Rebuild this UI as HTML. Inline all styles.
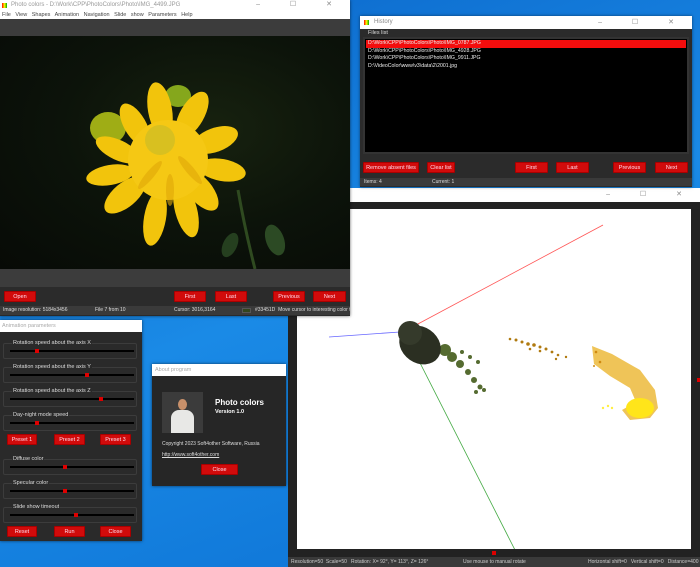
<!DOCTYPE html>
<html><head><meta charset="utf-8"><style>
*{margin:0;padding:0;box-sizing:border-box}
body{width:700px;height:567px;overflow:hidden;position:relative;background:linear-gradient(160deg,#0a64c8 0%,#1a8ae6 50%,#0b6fd2 100%);font-family:"Liberation Sans",sans-serif;font-size:6px;color:#ddd}
.abs{position:absolute}
.tb{background:#fff;color:#888;font-size:6px;line-height:13px;padding-left:3px}
.btn{position:absolute;background:#d10b0b;color:#fde;font-size:5.5px;text-align:center;border:1px solid #a00;border-radius:1px}
.ctl{position:absolute;right:4px;top:0;color:#888;font-size:7px;letter-spacing:14px}
.grp{position:absolute;border:1px solid #3c3c3c;border-radius:2px}
.grp span{position:absolute;top:-4px;left:8px;font-size:5.5px;color:#ddd;background:#2a2a2a;padding:0 1px}
.trk{position:absolute;left:6px;right:2px;height:2px;background:#000}
.th{position:absolute;width:4px;height:4px;background:#d00;top:-1px}
</style></head><body>

<!-- 3D window -->
<div class="abs" style="left:288px;top:188px;width:412px;height:379px;background:#222">
 <div class="tb abs" style="left:0;top:0;width:412px;height:14px"><span class="ctl" style="right:4px">– ☐ ✕</span></div>
 <div class="abs" style="left:9px;top:21px;width:394px;height:340px;background:#fff;overflow:hidden">
  <svg width="394" height="340" viewBox="297 209 394 340">
   <line x1="416" y1="325" x2="603" y2="225" stroke="#f55" stroke-width="0.8"/>
   <line x1="329" y1="337" x2="400" y2="332" stroke="#66f" stroke-width="0.8"/>
   <line x1="416" y1="355" x2="515" y2="550" stroke="#4a4" stroke-width="0.8"/>
   <g fill="#556b30">
    <circle cx="445" cy="350" r="6"/><circle cx="452" cy="357" r="5"/><circle cx="460" cy="364" r="4"/><circle cx="468" cy="372" r="3"/><circle cx="474" cy="380" r="3"/><circle cx="480" cy="387" r="2.5"/><circle cx="462" cy="352" r="2"/><circle cx="470" cy="357" r="2"/><circle cx="478" cy="362" r="2"/><circle cx="476" cy="392" r="2"/><circle cx="484" cy="390" r="2"/>
   </g>
   <ellipse cx="420" cy="345" rx="22" ry="18" fill="#2b2f22" transform="rotate(35 420 345)"/>
   <circle cx="410" cy="333" r="12" fill="#353a2b"/>
   <g fill="#b07a10">
    <circle cx="510" cy="339" r="1.3"/><circle cx="516" cy="340" r="1.5"/><circle cx="522" cy="342" r="1.5"/><circle cx="528" cy="344" r="1.8"/><circle cx="534" cy="345" r="1.8"/><circle cx="540" cy="347" r="1.5"/><circle cx="546" cy="349" r="1.5"/><circle cx="552" cy="352" r="1.4"/><circle cx="558" cy="355" r="1.3"/><circle cx="566" cy="357" r="1.2"/><circle cx="530" cy="349" r="1.3"/><circle cx="540" cy="351" r="1.3"/><circle cx="556" cy="359" r="1.2"/>
   </g>
   <path d="M592 346 L612 354 L640 370 L655 390 L658 408 L650 418 L630 420 L622 410 L636 402 L630 388 L610 376 L594 364Z" fill="#eab020" opacity="0.75"/>
   <ellipse cx="640" cy="408" rx="14" ry="10" fill="#ffe51a"/>
   <g fill="#ffee40"><circle cx="603" cy="408" r="1.2"/><circle cx="608" cy="406" r="1.2"/><circle cx="612" cy="408" r="1.2"/></g>
   <g fill="#d08a10"><circle cx="596" cy="352" r="1.3"/><circle cx="600" cy="362" r="1.3"/><circle cx="594" cy="366" r="1"/></g>
  </svg>
 </div>
 <div class="abs" style="left:409px;top:190px;width:3px;height:4px;background:#d00"></div>
 <div class="abs" style="left:204px;top:363px;width:4px;height:4px;background:#d00"></div>
 <div class="abs" style="left:0;top:369px;width:412px;height:10px;background:#3a3a3a;color:#ccc;font-size:5px;line-height:10px;padding-left:3px;white-space:nowrap">Resolution=50&nbsp; Scale=50&nbsp;&nbsp; Rotation: X= 92°, Y= 113°, Z= 126°<span class="abs" style="left:175px">Use mouse to manual rotate</span><span class="abs" style="left:300px">Horizontal shift=0&nbsp;&nbsp; Vertical shift=0&nbsp;&nbsp; Distance=400</span></div>
</div>

<!-- History window -->
<div class="abs" style="left:360px;top:16px;width:332px;height:171px;background:#2b2b2b;box-shadow:0 0 3px rgba(0,0,0,.5)">
 <div class="tb abs" style="left:0;top:0;width:332px;height:13px;padding-left:14px">History<span class="abs" style="left:4px;top:4px;width:5px;height:5px;background:linear-gradient(90deg,#f00,#ff0,#0a0)"></span><span class="ctl">– ☐ ✕</span></div>
 <div class="abs" style="left:8px;top:14px;font-size:5.5px;color:#ddd">Files list</div>
 <div class="abs" style="left:3px;top:21px;width:326px;height:117px;background:#000;border:2px solid #333;font-size:5.2px;line-height:7.7px;color:#eee">
  <div style="background:#f40d0d;margin:1px 1px 0;padding-left:2px">D:\Work\CPP\PhotoColors\Photo\IMG_0787.JPG</div>
  <div style="padding-left:3px">D:\Work\CPP\PhotoColors\Photo\IMG_4928.JPG</div>
  <div style="padding-left:3px">D:\Work\CPP\PhotoColors\Photo\IMG_9911.JPG</div>
  <div style="padding-left:3px">D:\VideoColor\www\v3\data\2\2001.jpg</div>
 </div>
 <div class="btn" style="left:3px;top:146px;width:56px;height:11px;line-height:10px">Remove absent files</div>
 <div class="btn" style="left:67px;top:146px;width:28px;height:11px;line-height:10px">Clear list</div>
 <div class="btn" style="left:155px;top:146px;width:33px;height:11px;line-height:10px">First</div>
 <div class="btn" style="left:196px;top:146px;width:33px;height:11px;line-height:10px">Last</div>
 <div class="btn" style="left:253px;top:146px;width:33px;height:11px;line-height:10px">Previous</div>
 <div class="btn" style="left:295px;top:146px;width:33px;height:11px;line-height:10px">Next</div>
 <div class="abs" style="left:0;top:162px;width:332px;height:8px;background:#3a3a3a;font-size:5px;line-height:8px;padding-left:4px;color:#ddd">Items: 4<span class="abs" style="left:72px">Current: 1</span></div>
</div>

<!-- Main window -->
<div class="abs" style="left:0;top:0;width:350px;height:316px;background:#2b2b2b;box-shadow:0 0 3px rgba(0,0,0,.6)">
 <div class="tb abs" style="left:0;top:0;width:350px;height:11px;line-height:10px;padding-left:11px;color:#999">Photo colors - D:\Work\CPP\PhotoColors\Photo\IMG_4499.JPG<span class="abs" style="left:2px;top:3px;width:5px;height:5px;background:linear-gradient(90deg,#f00,#ff0,#0a0)"></span><span class="ctl" style="line-height:10px">– ☐ ✕</span></div>
 <div class="abs" style="left:0;top:11px;width:350px;height:8px;background:#fff;color:#444;font-size:5.5px;line-height:8px;padding-left:2px;word-spacing:3px">File View Shapes Animation Navigation Slide&nbsp;show Parameters Help</div>
 <div class="abs" style="left:0;top:19px;width:350px;height:17px;background:#3c3c3c"></div>
 <div class="abs" style="left:0;top:36px;width:350px;height:233px;background:radial-gradient(ellipse at 60% 40%,#17220f 0%,#0c130a 50%,#070a06 100%);overflow:hidden">
  <svg width="350" height="233" viewBox="0 36 350 233">
   <path d="M238 190 Q245 230 255 269" stroke="#2f4a20" stroke-width="3" fill="none"/>
   <ellipse cx="275" cy="240" rx="9" ry="16" fill="#2c4a24" transform="rotate(-20 275 240)"/>
   <ellipse cx="230" cy="245" rx="7" ry="13" fill="#253f1f" transform="rotate(25 230 245)"/>
   <ellipse cx="178" cy="96" rx="13" ry="11" fill="#9ac020" opacity="0.85"/>
   <ellipse cx="108" cy="128" rx="18" ry="16" fill="#b8c818" opacity="0.85"/>
   <g fill="#f2c40c">
    <ellipse cx="160" cy="110" rx="12" ry="28" transform="rotate(-10 160 110)"/>
    <ellipse cx="192" cy="115" rx="12" ry="26" transform="rotate(30 192 115)"/>
    <ellipse cx="215" cy="140" rx="12" ry="24" transform="rotate(70 215 140)"/>
    <ellipse cx="222" cy="170" rx="11" ry="24" transform="rotate(100 222 170)"/>
    <ellipse cx="200" cy="190" rx="12" ry="25" transform="rotate(140 200 190)"/>
    <ellipse cx="186" cy="210" rx="11" ry="28" transform="rotate(165 186 210)"/>
    <ellipse cx="155" cy="218" rx="11" ry="28" transform="rotate(190 155 218)"/>
    <ellipse cx="125" cy="195" rx="12" ry="25" transform="rotate(230 125 195)"/>
    <ellipse cx="110" cy="175" rx="10" ry="24" transform="rotate(260 110 175)"/>
    <ellipse cx="118" cy="150" rx="10" ry="24" transform="rotate(295 118 150)"/>
    <ellipse cx="135" cy="125" rx="11" ry="24" transform="rotate(330 135 125)"/>
   </g>
   <circle cx="168" cy="160" r="40" fill="#f5c814"/>
   <g fill="#e0a808" opacity="0.6"><ellipse cx="150" cy="175" rx="4" ry="18" transform="rotate(40 150 175)"/><ellipse cx="190" cy="170" rx="4" ry="18" transform="rotate(-40 190 170)"/><ellipse cx="170" cy="190" rx="4" ry="16"/></g>
   <circle cx="160" cy="140" r="15" fill="#d8c020"/>
  </svg>
 </div>
 <div class="abs" style="left:0;top:269px;width:350px;height:18px;background:#3c3c3c"></div>
 <div class="btn" style="left:4px;top:291px;width:32px;height:11px;line-height:10px">Open</div>
 <div class="btn" style="left:174px;top:291px;width:32px;height:11px;line-height:10px">First</div>
 <div class="btn" style="left:215px;top:291px;width:32px;height:11px;line-height:10px">Last</div>
 <div class="btn" style="left:273px;top:291px;width:32px;height:11px;line-height:10px">Previous</div>
 <div class="btn" style="left:313px;top:291px;width:33px;height:11px;line-height:10px">Next</div>
 <div class="abs" style="left:0;top:306px;width:350px;height:9px;background:#3a3a3a;font-size:5px;line-height:9px;padding-left:3px;color:#ddd;white-space:nowrap;overflow:hidden">Image resolution: 5184x3456<span class="abs" style="left:95px">File 7 from 10</span><span class="abs" style="left:174px">Cursor: 3016,3164</span><span class="abs" style="left:242px;top:2px;width:9px;height:5px;background:#33451d;border:1px solid #555"></span><span class="abs" style="left:255px">#33451D&nbsp; Move cursor to interesting color to</span></div>
</div>

<!-- Animation parameters -->
<div class="abs" style="left:0;top:320px;width:142px;height:221px;background:#2a2a2a;box-shadow:0 0 3px rgba(0,0,0,.6)">
 <div class="tb abs" style="left:0;top:0;width:142px;height:12px;line-height:12px;font-size:5.5px;padding-left:2px;color:#aaa">Animation parameters</div>
 <div class="grp" style="left:3px;top:23px;width:134px;height:16px"><span>Rotation speed about the axis X</span><div class="trk" style="top:6px"><div class="th" style="left:25px"></div></div></div>
 <div class="grp" style="left:3px;top:47px;width:134px;height:16px"><span>Rotation speed about the axis Y</span><div class="trk" style="top:6px"><div class="th" style="left:75px"></div></div></div>
 <div class="grp" style="left:3px;top:71px;width:134px;height:16px"><span>Rotation speed about the axis Z</span><div class="trk" style="top:6px"><div class="th" style="left:89px"></div></div></div>
 <div class="grp" style="left:3px;top:95px;width:134px;height:16px"><span>Day-night mode speed</span><div class="trk" style="top:6px"><div class="th" style="left:25px"></div></div></div>
 <div class="btn" style="left:7px;top:114px;width:30px;height:11px;line-height:10px">Preset 1</div>
 <div class="btn" style="left:54px;top:114px;width:31px;height:11px;line-height:10px">Preset 2</div>
 <div class="btn" style="left:100px;top:114px;width:31px;height:11px;line-height:10px">Preset 3</div>
 <div class="grp" style="left:3px;top:139px;width:134px;height:16px"><span>Diffuse color</span><div class="trk" style="top:6px"><div class="th" style="left:53px"></div></div></div>
 <div class="grp" style="left:3px;top:163px;width:134px;height:16px"><span>Specular color</span><div class="trk" style="top:6px"><div class="th" style="left:53px"></div></div></div>
 <div class="grp" style="left:3px;top:187px;width:134px;height:16px"><span>Slide show timeout</span><div class="trk" style="top:6px"><div class="th" style="left:64px"></div></div></div>
 <div class="btn" style="left:7px;top:206px;width:30px;height:11px;line-height:10px">Reset</div>
 <div class="btn" style="left:54px;top:206px;width:31px;height:11px;line-height:10px">Run</div>
 <div class="btn" style="left:100px;top:206px;width:31px;height:11px;line-height:10px">Close</div>
</div>

<!-- About -->
<div class="abs" style="left:152px;top:364px;width:134px;height:122px;background:#262626;box-shadow:0 0 3px rgba(0,0,0,.6)">
 <div class="tb abs" style="left:0;top:0;width:134px;height:12px;line-height:12px;font-size:5.5px;color:#aaa">About program</div>
 <div class="abs" style="left:10px;top:28px;width:41px;height:41px;background:#3b3b3b">
  <div class="abs" style="left:16px;top:7px;width:9px;height:11px;border-radius:50%;background:#c8906a"></div>
  <div class="abs" style="left:9px;top:18px;width:23px;height:23px;border-radius:8px 8px 0 0;background:#e8e8e6"></div>
 </div>
 <div class="abs" style="left:63px;top:34px;font-size:8px;font-weight:bold;color:#fff">Photo colors</div>
 <div class="abs" style="left:63px;top:45px;font-size:5.5px;font-weight:bold;color:#fff">Version 1.0</div>
 <div class="abs" style="left:10px;top:77px;font-size:5px;color:#ddd">Copyright 2023 Soft4other Software, Russia</div>
 <div class="abs" style="left:10px;top:88px;font-size:5px;color:#ddd;text-decoration:underline">http://www.soft4other.com</div>
 <div class="btn" style="left:49px;top:100px;width:37px;height:11px;line-height:10px">Close</div>
</div>
</body></html>
